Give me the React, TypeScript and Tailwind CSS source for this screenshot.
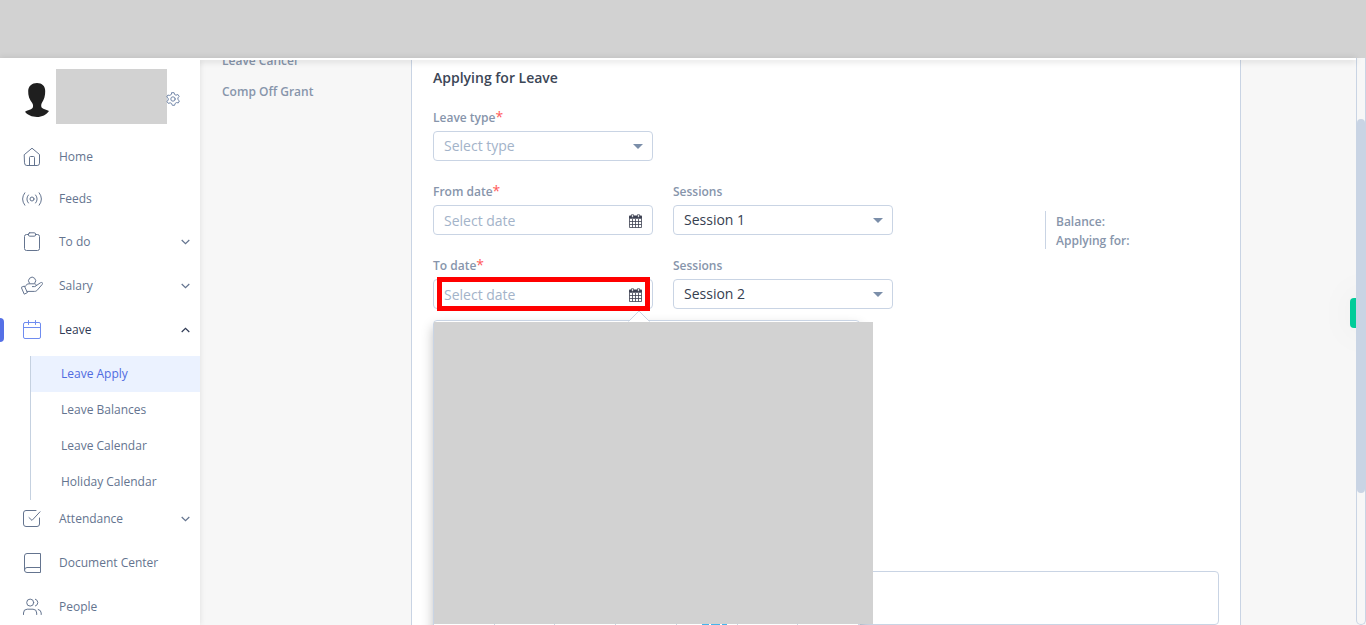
import { useState } from 'react';
import type { ReactNode } from 'react';
import clsx from 'clsx';

/* ---------- Icons ---------- */

function Icon({ children, size = 22, className }: { children: ReactNode; size?: number; className?: string }) {
  return (
    <svg
      width={size}
      height={size}
      viewBox={`0 0 ${size} ${size}`}
      fill="none"
      stroke="currentColor"
      strokeWidth="1"
      strokeLinecap="round"
      strokeLinejoin="round"
      aria-hidden="true"
      className={clsx('shrink-0', className)}
    >
      {children}
    </svg>
  );
}

const HomeIcon = () => (
  <Icon>
    <path d="M3.5 8.5 L11 2.2 L18.5 8.5 V17.2 Q18.5 19.5 16.2 19.5 H5.8 Q3.5 19.5 3.5 17.2 Z" />
    <path d="M8.5 19.5 V11.5 Q8.5 10.5 9.5 10.5 H12.5 Q13.5 10.5 13.5 11.5 V19.5" />
  </Icon>
);

const FeedsIcon = () => (
  <Icon>
    <circle cx="11" cy="11" r="2" />
    <path d="M7.4 7 Q4.2 11 7.4 15 M14.6 7 Q17.8 11 14.6 15" />
    <path d="M3.8 4.8 Q-0.8 11 3.8 17.2 M18.2 4.8 Q22.8 11 18.2 17.2" />
  </Icon>
);

const TodoIcon = () => (
  <Icon>
    <path d="M7.5 3.5 H5.5 Q3.5 3.5 3.5 5.5 V17.5 Q3.5 19.5 5.5 19.5 H16.5 Q18.5 19.5 18.5 17.5 V5.5 Q18.5 3.5 16.5 3.5 H14.5" />
    <rect x="7.5" y="1.8" width="7" height="3.4" rx="1.2" />
  </Icon>
);

const SalaryIcon = () => (
  <Icon>
    <path d="M8.4 8.2 A3.6 3.6 0 1 1 13.8 8.2" />
    <path d="M0.6 12.2 L3.4 11 L6.4 17.6 L3.6 19 Z" />
    <path d="M4 11.6 C5.4 9.6 6.4 8.8 8 8.8 H13.6 C15.6 8.8 15.6 11.6 13.6 11.6 H11.4" />
    <path d="M15 10.8 L19.4 7.8 C21.2 6.8 22.2 8.2 21.2 9.4 L16.4 15 C15.6 16 14.8 16.4 13.6 16.4 H6.2" />
  </Icon>
);

const LeaveIcon = () => (
  <Icon className="text-[#6f8cf0]">
    <rect x="2.5" y="3.5" width="17" height="16" rx="1.5" />
    <path d="M2.5 8.5 H19.5 M7.5 1.5 V5.5 M14.5 1.5 V5.5" />
  </Icon>
);

const AttendanceIcon = () => (
  <Icon>
    <path d="M15 2.5 H5 Q2.5 2.5 2.5 5 V16 Q2.5 18.5 5 18.5 H16 Q18.5 18.5 18.5 16 V10" />
    <path d="M8 9.6 L11 12.4 L19 3.8" />
  </Icon>
);

const DocumentIcon = () => (
  <Icon>
    <path d="M19.5 15.5 V1.5 H6 Q3.5 1.5 3.5 4 V18 Q3.5 20.5 6 20.5 H19.5 V15.5 H6 Q3.5 15.5 3.5 18" />
  </Icon>
);

const PeopleIcon = () => (
  <Icon>
    <circle cx="9.2" cy="6.6" r="3.5" />
    <path d="M2.5 18.5 V17 Q2.5 13.2 6.2 13.2 H12 Q15.7 13.2 15.7 17 V18.5" />
    <path d="M14.4 3.2 Q16.8 4 16.8 6.6 Q16.8 9.2 14.4 10" />
    <path d="M17.2 13.4 Q20.2 14.2 20.2 17 V18.5" />
  </Icon>
);

const GearIcon = () => (
  <Icon size={14}>
    <circle cx="7" cy="7" r="2.2" />
    <path d="M5.9 0.7 H8.1 L8.6 2.5 L10 3.2 L11.9 2.5 L13.2 4.4 L11.9 5.9 V7.6 L13.4 8.9 L12.3 10.9 L10.4 10.6 L9.1 11.5 L8.6 13.3 H6.3 L5.6 11.5 L4.2 10.8 L2.3 11.4 L1 9.5 L2.2 8 V6.3 L0.7 5 L1.8 3.1 L3.8 3.4 L5.2 2.5 Z" />
  </Icon>
);

const Chevron = ({ up }: { up?: boolean }) => (
  <svg width="9" height="6" viewBox="0 0 9 6" fill="none" stroke="currentColor" strokeWidth="1.2" aria-hidden="true" className="shrink-0">
    <path d={up ? 'M0.7 5 L4.5 1.3 L8.3 5' : 'M0.7 1 L4.5 4.7 L8.3 1'} />
  </svg>
);

const CalendarGrid = () => (
  <svg width="14" height="14" viewBox="0 0 14 14" aria-hidden="true" className="text-[#3d4152]">
    <path d="M0 2.4 Q0 1.6 0.8 1.6 H12.2 Q13 1.6 13 2.4 V4.8 H0 Z" fill="currentColor" />
    <path d="M0.5 4.5 V13.5 H12.5 V4.5 M3.5 5 V13.5 M6.5 5 V13.5 M9.5 5 V13.5 M0.5 7.5 H12.5 M0.5 10.5 H12.5" fill="none" stroke="currentColor" strokeWidth="0.8" />
    <rect x="2.6" y="0.2" width="1.8" height="3.2" rx="0.8" fill="#fff" stroke="currentColor" strokeWidth="0.8" />
    <rect x="8.6" y="0.2" width="1.8" height="3.2" rx="0.8" fill="#fff" stroke="currentColor" strokeWidth="0.8" />
  </svg>
);

const Avatar = () => (
  <svg width="24" height="34" viewBox="0 0 24 34" fill="#1f1f1f" aria-hidden="true" className="mt-[7px] shrink-0">
    <path d="M12 0 C17 0 20.3 3 20.2 8 C20.3 12.5 19.2 16.5 16.8 20 C16 21.5 16 23.5 16.8 24.8 C18.5 26.5 22 26.8 24 28 C21.5 31.8 17 34 12 34 C7 34 2.5 32 0 28.8 C2 27.2 6 27 7.6 25 C8.4 23.5 8.2 21.5 7.2 20 C4.4 16.5 3 12.5 3.2 8 C3.3 3 7 0 12 0 Z" />
  </svg>
);

/* ---------- Sidebar ---------- */

interface NavItemProps {
  label: string;
  icon: ReactNode;
  compact?: boolean;
  expandable?: boolean;
  active?: boolean;
}

function NavItem({ label, icon, compact, expandable, active }: NavItemProps) {
  const content = (
    <>
      <span className={clsx('h-6 w-1 rounded-r-sm', active && 'bg-[#5570e6]')} />
      <span className="ml-[17px]">{icon}</span>
      <span className={clsx('ml-4', active && 'font-medium')}>{label}</span>
      {expandable && (
        <span className="mr-[10px] ml-auto">
          <Chevron up={active} />
        </span>
      )}
    </>
  );
  const className = clsx(
    'flex w-full items-center text-left',
    compact ? 'h-[42px]' : 'h-11',
    active ? 'text-[#2f3a55]' : 'text-[#64748f]'
  );

  return expandable ? (
    <button type="button" aria-expanded={!!active} className={className}>
      {content}
    </button>
  ) : (
    <a href="#" className={className}>
      {content}
    </a>
  );
}

const leaveLinks = ['Leave Apply', 'Leave Balances', 'Leave Calendar', 'Holiday Calendar'];

function Sidebar() {
  return (
    <aside className="relative z-20 w-[200px] shrink-0 bg-white shadow-[0_0_6px_rgba(0,0,0,0.1)]">
      <div className="flex items-center pt-[9px] pl-[25px]">
        <Avatar />
        <div className="ml-[7px] h-[55px] w-[111px] bg-[#d2d2d2]" />
        <button type="button" aria-label="Settings" className="mt-1 -ml-px text-[#7186a8]">
          <GearIcon />
        </button>
      </div>

      <nav className="mt-3 text-[12px]">
        <NavItem label="Home" icon={<HomeIcon />} compact />
        <NavItem label="Feeds" icon={<FeedsIcon />} compact />
        <NavItem label="To do" icon={<TodoIcon />} expandable />
        <NavItem label="Salary" icon={<SalaryIcon />} expandable />
        <NavItem label="Leave" icon={<LeaveIcon />} expandable active />
        <ul className="mt-1 -mb-[3px] ml-[30px] border-l border-[#c5d1e0]">
          {leaveLinks.map((label, i) => (
            <li key={label}>
              <a
                href="#"
                className={clsx(
                  'flex h-9 items-center pl-[30px]',
                  i === 0 ? 'bg-[#ebf2ff] text-[#4f6be0]' : 'text-[#64748f]'
                )}
              >
                {label}
              </a>
            </li>
          ))}
        </ul>
        <NavItem label="Attendance" icon={<AttendanceIcon />} expandable />
        <NavItem label="Document Center" icon={<DocumentIcon />} />
        <NavItem label="People" icon={<PeopleIcon />} />
      </nav>
    </aside>
  );
}

/* ---------- Form ---------- */

function FieldLabel({ id, label, required }: { id: string; label: string; required?: boolean }) {
  return (
    <label htmlFor={id} className="mb-1 flex h-[18px] items-center text-[12px] font-semibold text-[#8795ab]">
      {label}
      {required && <span className="mb-1 text-[14px] font-normal text-[#ff5a5a]">*</span>}
    </label>
  );
}

interface SelectFieldProps {
  id: string;
  label: string;
  options: string[];
  placeholder?: boolean;
  required?: boolean;
}

function SelectField({ id, label, options, placeholder, required }: SelectFieldProps) {
  return (
    <div className="w-[220px]">
      <FieldLabel id={id} label={label} required={required} />
      <div className="relative">
        <select
          id={id}
          className={clsx(
            'block h-[30px] w-full appearance-none rounded border border-[#c9d4e4] bg-white px-[10px] pb-0.5 text-[14px]',
            placeholder ? 'text-[#a3b3c9]' : 'font-medium text-[#36404f]'
          )}
        >
          {options.map((option) => (
            <option key={option}>{option}</option>
          ))}
        </select>
        <span className="pointer-events-none absolute top-[13px] right-[10px] border-x-5 border-t-5 border-x-transparent border-t-[#7b8ea9]" />
      </div>
    </div>
  );
}

interface DateFieldProps {
  id: string;
  label: string;
  children?: ReactNode;
}

function DateField({ id, label, children }: DateFieldProps) {
  const [value, setValue] = useState('');
  return (
    <div className="w-[220px]">
      <FieldLabel id={id} label={label} required />
      <div className="relative">
        <input
          id={id}
          type="text"
          placeholder="Select date"
          value={value}
          onChange={(e) => setValue(e.target.value)}
          className="block h-[30px] w-full rounded border border-[#c9d4e4] bg-white px-[10px] text-[14px] placeholder:text-[#a3b3c9]"
        />
        <button type="button" aria-label={`Open ${label} calendar`} className="absolute top-[9px] right-[10px]">
          <CalendarGrid />
        </button>
        {children}
      </div>
    </div>
  );
}

function DatePopup() {
  return (
    <div className="absolute top-[41px] left-0 z-10 w-[427px] rounded border border-[#c9d4e4] bg-white shadow-[0_6px_12px_rgba(0,0,0,0.25)]">
      <svg width="22" height="12" viewBox="0 0 22 12" aria-hidden="true" className="absolute -top-[11px] left-[194px]">
        <path d="M0.5 11.5 L11 1 L21.5 11.5" fill="#fff" stroke="#c9d4e4" />
      </svg>
      <div className="relative mt-px h-[302px] w-[439px] bg-[#d2d2d2]" />
      {/* First week under the covered part */}
      <div className="grid h-9 grid-cols-7">
        {[0, 1, 2, 3, 4, 5, 6].map((day) => (
          <div key={day} className="flex justify-end gap-[2px] border-r border-[#c9d4e4] pr-[10px]">
            {day === 4 && (
              <>
                <span className="h-1 w-[7px] bg-[#45b5ee]" />
                <span className="h-1 w-[9px] bg-[#45b5ee]" />
                <span className="h-1 w-[5px] bg-[#45b5ee]" />
              </>
            )}
          </div>
        ))}
      </div>
    </div>
  );
}

function LeaveForm() {
  return (
    <section className="min-w-0 flex-1 border-x border-[#c9d4e4] bg-white px-[21px] pt-2">
      <h1 className="h-5 text-[14px] leading-5 font-semibold text-[#3c4656]">Applying for Leave</h1>
      <form className="mt-[21px]">
        <div className="flex justify-between">
          <div className="flex flex-col gap-[22px]">
            <SelectField id="leave-type" label="Leave type" options={['Select type']} placeholder required />
            <div className="flex gap-5">
              <DateField id="from-date" label="From date" />
              <SelectField id="from-session" label="Sessions" options={['Session 1', 'Session 2']} />
            </div>
            <div className="flex gap-5">
              <DateField id="to-date" label="To date">
                <DatePopup />
                <div className="pointer-events-none absolute -top-[2px] right-[3px] left-1 z-20 h-[34px] border-5 border-[#ff0000]" />
              </DateField>
              <SelectField id="to-session" label="Sessions" options={['Session 2', 'Session 1']} />
            </div>
          </div>
          <div className="mt-[102px] h-[38px] w-[174px] border-l border-[#c9d4e4] pt-px pl-[10px] text-[12px] leading-[19px] font-semibold text-[#8795ab]">
            <p>Balance:</p>
            <p>Applying for:</p>
          </div>
        </div>
        <textarea
          aria-label="Details"
          className="mt-[262px] block h-[54px] w-full resize-none rounded border border-[#c9d4e4]"
        />
      </form>
    </section>
  );
}

export default function App() {
  return (
    <div className="flex h-screen flex-col overflow-hidden bg-[#f7f7f7] font-['Open_Sans','Noto_Sans',sans-serif]">
      <header className="h-[58px] shrink-0 bg-[#d2d2d2]" />

      <div className="flex min-h-0 flex-1">
        <div className="flex min-w-0 flex-1 flex-col">
          <div className="relative z-10 h-[2px] shrink-0 bg-white shadow-[0_1px_6px_rgba(0,0,0,0.25)]" />
          <div className="flex min-h-0 flex-1 overflow-hidden">
            <Sidebar />
            <nav className="-mt-[15px] w-[211px] shrink-0 pl-[22px] text-[12px] font-semibold text-[#8795ab]">
              <a href="#" className="flex h-[31px] items-center">Leave Cancel</a>
              <a href="#" className="flex h-[31px] items-center">Comp Off Grant</a>
            </nav>
            <LeaveForm />
            <div className="relative w-[115px] shrink-0 overflow-hidden">
              <button
                type="button"
                aria-label="Help"
                className="absolute top-[238px] right-0 h-[30px] w-[6px] rounded-l bg-[#00cc99] shadow-[12px_0_36px_rgba(0,0,0,0.25)]"
              />
            </div>
          </div>
        </div>

        {/* Scroll track */}
        <div className="w-[10px] shrink-0 rounded-b-md border-x border-b border-[#c9d4e4] pt-[61px]">
          <div className="h-[374px] rounded bg-[#c9d4e4]" />
        </div>
      </div>
    </div>
  );
}
